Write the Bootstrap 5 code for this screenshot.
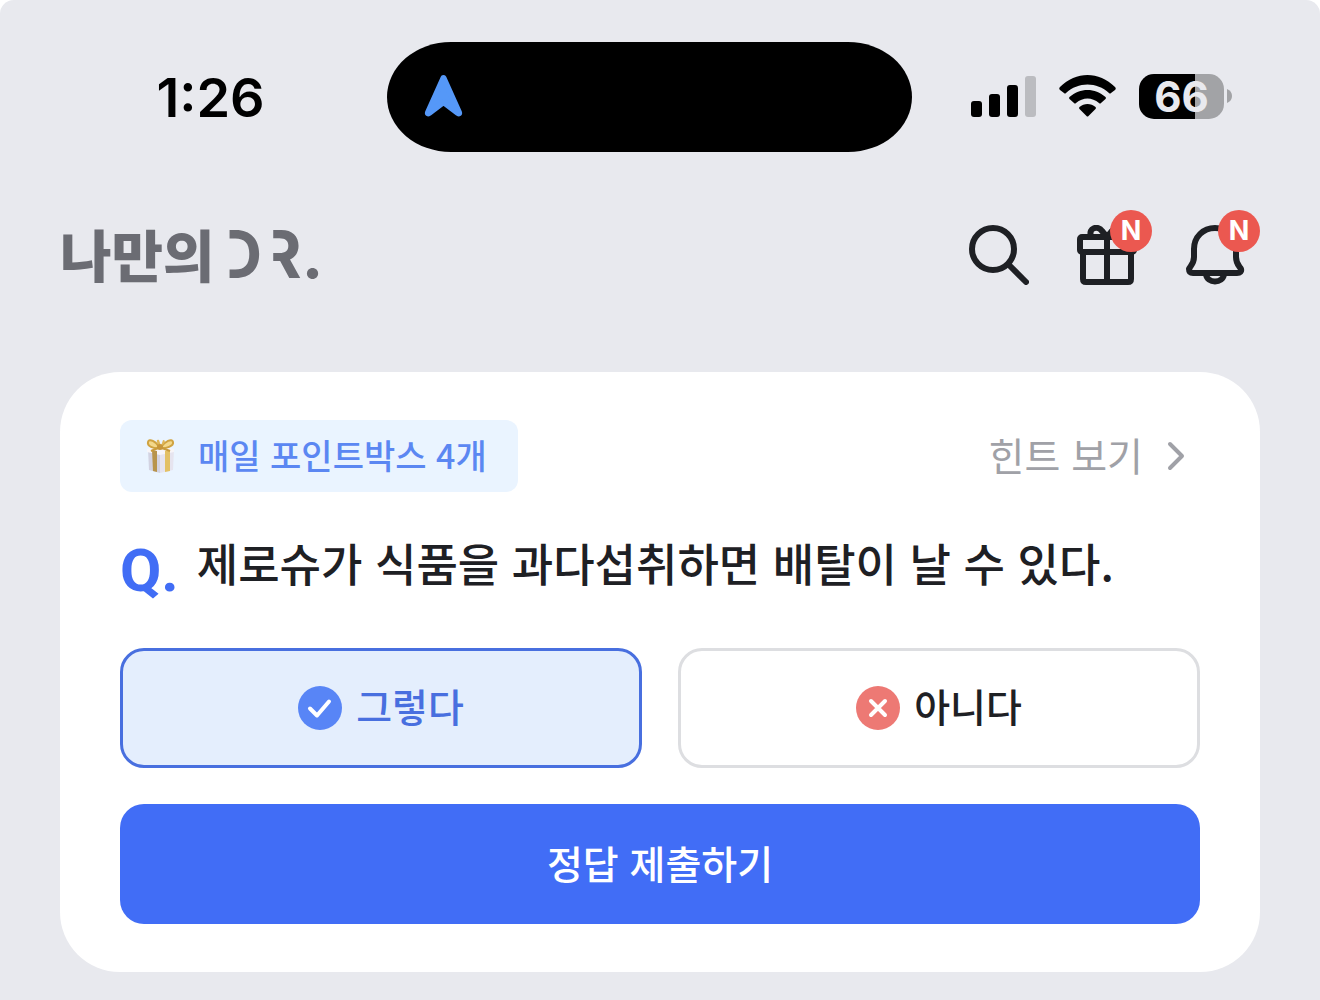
<!DOCTYPE html>
<html lang="ko">
<head>
<meta charset="utf-8">
<meta name="viewport" content="width=device-width, initial-scale=1">
<title>나만의 DR.</title>
<link href="https://cdn.jsdelivr.net/npm/bootstrap@5.3.0/dist/css/bootstrap.min.css" rel="stylesheet">
<style>
  body { background: #fff; font-family: "Noto Sans CJK KR", sans-serif; color: #1e2024; }
  svg { display: block; flex: none; }
  .screen { background: #e8e9ee; border-radius: 14px 14px 0 0; min-height: 100vh; padding-top: 42px; padding-bottom: 28px; }

  .status-bar { display: grid; grid-template-columns: 1fr 525px 1fr; padding: 0 81px 0 60px; color: #000; }
  .clock { font: 600 54px/64px Inter, sans-serif; padding: 2px 26px 0 0; }
  .island { height: 110px; background: #000; border-radius: 64px / 55px; padding: 0 0 2px 37px; }
  .signals { gap: 23px; padding: 0 7px 2px 0; }
  .battery-level { width: 85px; height: 45px; border-radius: 15px; background: linear-gradient(90deg, #000 66%, #a2a3a6 66%); color: #e8e9ee; font: 700 42px/45px Inter, sans-serif; }

  .app-header { padding: 58px 75px 0 60px; }
  .brand { font-size: 56px; line-height: 84px; font-weight: 900; color: #6b6c73; padding-bottom: 4px; }
  .brand:hover { color: #6b6c73; }
  .brand-latin { font: 700 66px/84px Inter, sans-serif; padding-top: 2px; }
  .open-letter { display: inline-block; clip-path: inset(0 0 0 15px); }
  .open-letter + .open-letter { margin-left: -4px; }
  .header-icons { gap: 48px; }
  .icon-btn { width: 60px; height: 60px; }
  .new-dot { position: absolute; top: -15px; right: -15px; width: 42px; height: 42px; background: #eb5850; color: #fff; font: 700 27px/42px Inter, sans-serif; }

  .quiz { margin: 72px 60px 0; padding: 48px 60px; border-radius: 60px; }
  .point-chip { height: 72px; padding: 0 31px 2px 24px; gap: 21px; border-radius: 12px; background: #eaf4ff; color: #5b87f2; font-size: 34px; line-height: 48px; font-weight: 500; }
  .hint { font-size: 39px; line-height: 56px; gap: 24px; color: #a0a1a7; margin-right: 13px; }
  .hint span { padding-bottom: 4px; }
  .question { min-height: 156px; gap: 18px; padding-bottom: 6px; }
  .q-mark { font: 700 60px/72px Roboto, sans-serif; color: #416df5; padding-top: 8px; }
  .q-text { font-size: 45px; line-height: 64px; font-weight: 500; padding-bottom: 8px; }
  .answers { gap: 36px; }
  .answer { flex: 1; height: 120px; border: 3px solid #dddee1; border-radius: 24px; gap: 14px; font-size: 39px; line-height: 56px; font-weight: 500; color: #1e2024; background: #fff; }
  .answer span { padding-bottom: 6px; }
  .btn-check:checked + .answer { border-color: #486fdf; background: #e4eefd; color: #486fdf; }
  .submit { height: 120px; margin-top: 36px; padding-bottom: 10px; border-radius: 24px; background: #416df6; color: #fff; font-size: 39px; line-height: 56px; font-weight: 500; }
  .submit:hover { background: #365fe0; color: #fff; }
</style>
<script src="https://cdn.jsdelivr.net/npm/bootstrap@5.3.0/dist/js/bootstrap.bundle.min.js"></script>
</head>
<body>
<div class="screen">

  <div class="status-bar align-items-center">
    <div class="clock text-center">1:26</div>
    <div class="island d-flex align-items-center">
      <svg width="40" height="44" viewBox="0 0 40 44" fill="#5598f8" stroke="#5598f8" stroke-width="6" stroke-linejoin="round"><path d="M19.500 4L4 38.500Q3.500 40 5 39L19.500 28L34 39Q35.500 40 35 38.500Z"/></svg>
    </div>
    <div class="signals d-flex align-items-center justify-content-end">
      <svg width="65" height="41" viewBox="0 0 65 41"><rect y="25" width="11" height="16" rx="3"/><rect x="18" y="18" width="11" height="23" rx="3"/><rect x="36" y="9" width="11" height="32" rx="3"/><rect x="54" width="11" height="41" rx="3" fill="#bbbcc0"/></svg>
      <svg width="57" height="42" viewBox="0 0 57 42"><path d="M1 12Q-.5 13.500 1 15L5 18Q6 19 7 18C19 6.500 38 6.500 50 18Q51 19 52 18L56 15Q57.500 13.500 56 12C40-4 17-4 1 12Z"/><path d="M10.500 22Q9.500 23 10.500 24L15 28Q16 29 17 28C24 22 33 22 40 28Q41 29 42 28L46.500 24Q47.500 23 46.500 22C36 12.500 21 12.500 10.500 22Z"/><path d="M20.500 32Q19.500 33 20.500 34L27.500 41Q28.500 42 29.500 41L36.500 34Q37.500 33 36.500 32C32 28 25 28 20.500 32Z"/></svg>
      <div class="d-flex align-items-center">
        <div class="battery-level text-center">66</div>
        <svg width="8" height="14" viewBox="0 0 8 14"><path d="M3 0Q8 2 8 7T3 14Z" fill="#a2a3a6"/></svg>
      </div>
    </div>
  </div>

  <header class="app-header d-flex align-items-center justify-content-between">
    <a class="brand d-flex align-items-center text-decoration-none" href="#"><span>나만의</span><span class="brand-latin"><span class="open-letter">D</span><span class="open-letter">R</span>.</span></a>
    <nav class="header-icons d-flex" aria-label="메뉴">
      <button type="button" class="icon-btn btn p-0 border-0" aria-label="검색">
        <svg width="60" height="60" viewBox="0 0 60 60" fill="none" stroke="#1e2024" stroke-width="6" stroke-linecap="round"><circle cx="24" cy="24" r="21"/><path d="M40 40L57 57"/></svg>
      </button>
      <button type="button" class="icon-btn btn p-0 border-0 position-relative" aria-label="선물">
        <svg width="60" height="60" viewBox="0 0 60 60" fill="none" stroke="#1e2024" stroke-width="6" stroke-linejoin="round"><rect x="3" y="12" width="54" height="15" rx="2"/><path d="M6 27V54Q6 57 9 57H51Q54 57 54 54V27M30 12V57"/><path d="M14 11C11 3 21 0 25 6L30 12L35 6C39 0 49 3 46 11"/></svg>
        <span class="new-dot rounded-circle text-center">N</span>
      </button>
      <button type="button" class="icon-btn btn p-0 border-0 position-relative" aria-label="알림">
        <svg width="60" height="60" viewBox="0 0 60 60" fill="none" stroke="#1e2024" stroke-width="6" stroke-linejoin="round"><path d="M30 3C18 3 9 12 9 24V32C9 39 5 41 4 44Q4 48 8 48H52Q57 48 56 44C54 41 51 39 51 32V24C51 12 42 3 30 3Z"/><path d="M21 49C22 59 38 59 39 49"/></svg>
        <span class="new-dot rounded-circle text-center">N</span>
      </button>
    </nav>
  </header>

  <main class="quiz bg-white">
    <div class="d-flex align-items-center justify-content-between">
      <div class="point-chip d-flex align-items-center">
        <svg width="33" height="36" viewBox="0 0 33 36">
          <path d="M4 12L16 15V36L5 33Z" fill="#d3d3e2"/><path d="M16 15L30 12L29 33L16 36Z" fill="#e6e4ef"/>
          <path d="M3 12L16 9L30 12V15L16 18L3 15Z" fill="#f7f5f8"/>
          <path d="M8 13L13 14V35L9 34Z" fill="#b8944c"/><path d="M21 14L26 13V34L21 35Z" fill="#e3c064"/>
          <path d="M16 11C12 4 5 1 4 5S9 12 16 11C21 4 28 1 29 5S22 12 16 11Z" fill="#f3d88b" stroke="#d0a341" stroke-width="2"/>
          <path d="M16 11C13 6 11 2 15 3L17 9L19 3C23 3 20 7 16 11Z" fill="#e0b758"/>
          <path d="M14 11L7 14M18 11L26 14" stroke="#c99b3c" stroke-width="2"/><circle cx="16" cy="10" r="3" fill="#c7963b"/>
        </svg>
        <span>매일 포인트박스 4개</span>
      </div>
      <a class="hint d-flex align-items-center text-decoration-none" href="#"><span>힌트 보기</span>
        <svg width="20" height="30" viewBox="0 0 20 30" fill="none" stroke="#a0a1a7" stroke-width="4" stroke-linecap="round" stroke-linejoin="round"><path d="M3 3L15 15L3 27"/></svg>
      </a>
    </div>

    <div class="question d-flex align-items-center" id="question">
      <span class="q-mark">Q.</span>
      <span class="q-text">제로슈가 식품을 과다섭취하면 배탈이 날 수 있다.</span>
    </div>

    <form>
      <div class="answers d-flex" role="radiogroup" aria-labelledby="question">
        <input class="btn-check" type="radio" name="answer" id="answer-yes" checked>
        <label class="answer btn d-flex align-items-center justify-content-center" for="answer-yes">
          <svg width="44" height="44" viewBox="0 0 44 44"><circle cx="22" cy="22" r="22" fill="#5885f6"/><path d="M12 22.500L19 29.500L31 15.500" fill="none" stroke="#fff" stroke-width="4" stroke-linecap="round" stroke-linejoin="round"/></svg>
          <span>그렇다</span>
        </label>
        <input class="btn-check" type="radio" name="answer" id="answer-no">
        <label class="answer btn d-flex align-items-center justify-content-center" for="answer-no">
          <svg width="44" height="44" viewBox="0 0 44 44"><circle cx="22" cy="22" r="22" fill="#ed7974"/><path d="M15 15L29 29M29 15L15 29" stroke="#fff" stroke-width="4" stroke-linecap="round"/></svg>
          <span>아니다</span>
        </label>
      </div>
      <button type="button" class="submit btn border-0 w-100">정답 제출하기</button>
    </form>
  </main>
</div>
</body>
</html>
